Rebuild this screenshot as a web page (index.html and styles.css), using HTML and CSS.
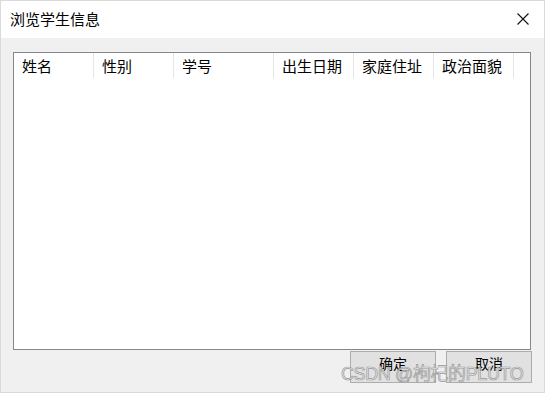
FILE: index.html
```html
<!doctype html>
<html lang="zh-CN">
  <head>
    <meta charset="UTF-8" />
    <title>浏览学生信息</title>
    <link rel="stylesheet" href="styles.css">
  </head>
  <body>
    <div class="window">
      <div class="titlebar">
        <span class="title">浏览学生信息</span>
        <svg class="close" width="12" height="12" viewBox="0 0 12 12">
          <path d="M0.5 0.5 L11.5 11.5 M11.5 0.5 L0.5 11.5" stroke="#111" stroke-width="1.1" fill="none" />
        </svg>
      </div>
      <div class="content">
        <div class="list">
          <div class="list-header">
            <div class="col">姓名</div>
            <div class="col">性别</div>
            <div class="col wide">学号</div>
            <div class="col">出生日期</div>
            <div class="col">家庭住址</div>
            <div class="col">政治面貌</div>
          </div>
        </div>
        <div class="buttons">
          <button class="btn">确定</button>
          <button class="btn">取消</button>
        </div>
      </div>
      <div class="watermark">CSDN @枸杞的PLUTO</div>
    </div>
  </body>
</html>
```

FILE: styles.css
```css
body {
  margin: 0;
  font-family: "Noto Sans CJK SC", "Noto Sans", sans-serif;
  background-color: #f0f0f0;
}
.window {
  position: relative;
  width: 543px;
  height: 391px;
  border: 1px solid #dadada;
  background-color: #f0f0f0;
  overflow: hidden;
}
.titlebar {
  height: 37px;
  background-color: white;
  display: flex;
  align-items: center;
  justify-content: space-between;
  padding: 0 15px 0 9px;
}
.title {
  font-size: 15px;
  color: #000;
  margin-top: -2px;
}
.close {
  margin-top: -2px;
}
.content {
  padding: 14px 0 0 12px;
}
.list {
  width: 516px;
  height: 296px;
  border: 1px solid #828790;
  background-color: white;
}
.list-header {
  display: flex;
  height: 25px;
}
.col {
  width: 80px;
  border-right: 1px solid #e5e5e5;
  padding-left: 8px;
  box-sizing: border-box;
  font-size: 15px;
  line-height: 25px;
  color: #000;
}
.col.wide {
  width: 100px;
}
.buttons {
  display: flex;
  justify-content: flex-end;
  gap: 10px;
  margin-top: 1px;
  width: 519px;
}
.btn {
  width: 86px;
  height: 32px;
  border: 1px solid #adadad;
  background-color: #e1e1e1;
  font-family: "Noto Sans CJK SC", sans-serif;
  font-size: 14px;
  color: #000;
  padding: 0 0 9px 0;
}
.watermark {
  position: absolute;
  left: 340px;
  top: 358px;
  font-family: "Liberation Sans", "Noto Sans CJK SC", sans-serif;
  font-size: 18px;
  letter-spacing: -0.4px;
  color: rgba(235, 235, 235, 0.85);
  -webkit-text-stroke: 0.7px #9a9a9a;
  white-space: nowrap;
}
```
